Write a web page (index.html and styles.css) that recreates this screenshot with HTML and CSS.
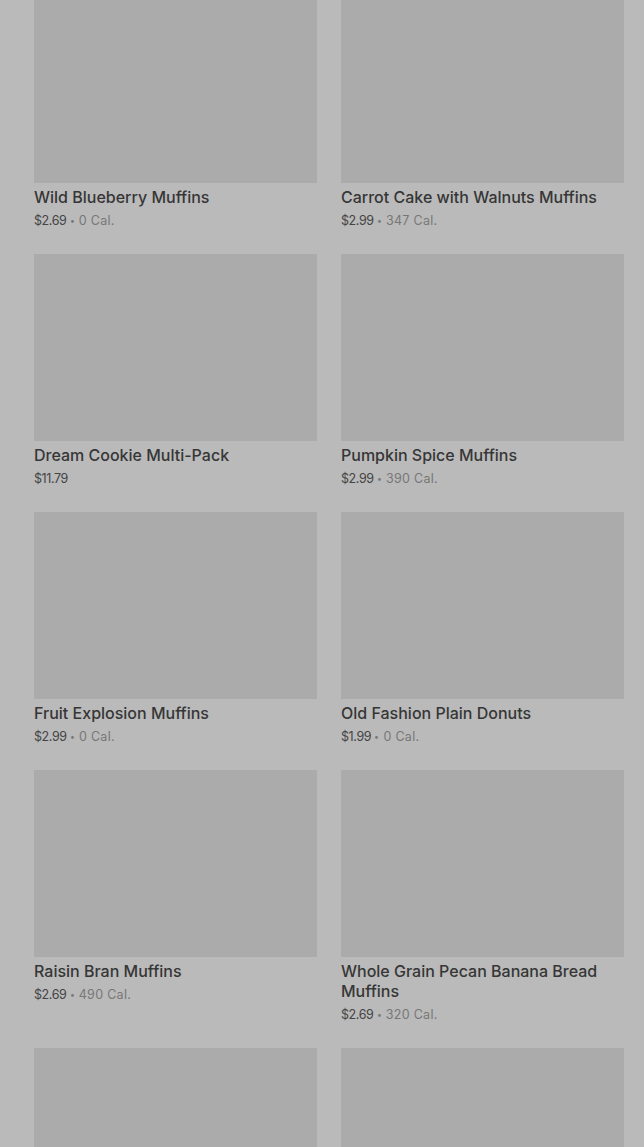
FILE: index.html
```html
<!DOCTYPE html>
<html lang="en">
<head>
  <meta charset="UTF-8">
  <meta name="viewport" content="width=device-width, initial-scale=1.0">
  <title>Menu</title>
  <link rel="stylesheet" href="styles.css">
</head>
<body>
  <div class="menu">
    <div class="item">
      <div class="foto"></div>
      <div class="nombre">Wild Blueberry Muffins</div>
      <div class="precio">$2.69 <span class="cal"><span class="punto">•</span> 0 Cal.</span></div>
    </div>
    <div class="item">
      <div class="foto"></div>
      <div class="nombre">Carrot Cake with Walnuts Muffins</div>
      <div class="precio">$2.99 <span class="cal"><span class="punto">•</span> 347 Cal.</span></div>
    </div>
    <div class="item">
      <div class="foto"></div>
      <div class="nombre">Dream Cookie Multi-Pack</div>
      <div class="precio">$11.79</div>
    </div>
    <div class="item">
      <div class="foto"></div>
      <div class="nombre">Pumpkin Spice Muffins</div>
      <div class="precio">$2.99 <span class="cal"><span class="punto">•</span> 390 Cal.</span></div>
    </div>
    <div class="item">
      <div class="foto"></div>
      <div class="nombre">Fruit Explosion Muffins</div>
      <div class="precio">$2.99 <span class="cal"><span class="punto">•</span> 0 Cal.</span></div>
    </div>
    <div class="item">
      <div class="foto"></div>
      <div class="nombre">Old Fashion Plain Donuts</div>
      <div class="precio">$1.99 <span class="cal"><span class="punto">•</span> 0 Cal.</span></div>
    </div>
    <div class="item">
      <div class="foto"></div>
      <div class="nombre">Raisin Bran Muffins</div>
      <div class="precio">$2.69 <span class="cal"><span class="punto">•</span> 490 Cal.</span></div>
    </div>
    <div class="item">
      <div class="foto"></div>
      <div class="nombre">Whole Grain Pecan Banana Bread Muffins</div>
      <div class="precio">$2.69 <span class="cal"><span class="punto">•</span> 320 Cal.</span></div>
    </div>
    <div class="item">
      <div class="foto"></div>
    </div>
    <div class="item">
      <div class="foto"></div>
    </div>
  </div>
</body>
</html>
```

FILE: styles.css
```css
body {
  margin: 0;
  background-color: #bababa;
  font-family: 'Inter', 'Liberation Sans', sans-serif;
  color: #333;
  overflow: hidden;
}
.menu {
  display: grid;
  grid-template-columns: 1fr 1fr;
  column-gap: 24px;
  row-gap: 24px;
  padding: 0 20px 0 34px;
  margin-top: -4px;
}
.foto {
  background-color: #ababab;
  height: 187px;
}
.nombre {
  margin-top: 4px;
  font-size: 16px;
  font-weight: 500;
  line-height: 20px;
  color: #363636;
}
.precio {
  margin-top: 5px;
  font-size: 12.5px;
  line-height: 18px;
  height: 18px;
  letter-spacing: -0.4px;
  color: #444;
}
.cal {
  color: #777;
  letter-spacing: 0.3px;
}
.punto {
  display: inline-block;
  margin: 0 -1px;
  transform: scale(0.7);
}
```
